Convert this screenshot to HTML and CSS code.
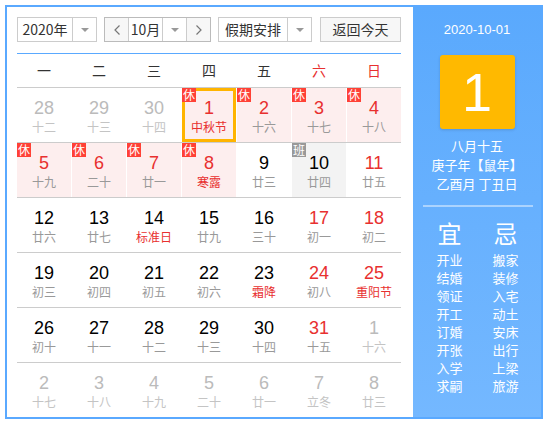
FILE: index.html
```html
<!DOCTYPE html>
<html lang="zh-CN">
<head>
  <meta charset="UTF-8">
  <meta name="viewport" content="width=device-width, initial-scale=1.0">
  <title>万年历</title>
  <link rel="stylesheet" href="styles.css">
</head>
<body>
  <div class="calendar">
    <div class="main">
      <div class="toolbar">
        <div class="select year-select">
          <span class="select-text">2020年</span>
          <span class="select-arrow"><svg width="8" height="4" viewBox="0 0 8 4"><path d="M0 0h8L4 4z" fill="#999"/></svg></span>
        </div>
        <div class="month-group">
          <span class="nav-btn"><svg width="6" height="10" viewBox="0 0 6 10"><path d="M5.5 0.5L1 5l4.5 4.5" fill="none" stroke="#777" stroke-width="1.2"/></svg></span>
          <div class="select month-select">
            <span class="select-text">10月</span>
            <span class="select-arrow"><svg width="8" height="4" viewBox="0 0 8 4"><path d="M0 0h8L4 4z" fill="#999"/></svg></span>
          </div>
          <span class="nav-btn"><svg width="6" height="10" viewBox="0 0 6 10"><path d="M0.5 0.5L5 5l-4.5 4.5" fill="none" stroke="#777" stroke-width="1.2"/></svg></span>
        </div>
        <div class="select holiday-select">
          <span class="select-text">假期安排</span>
          <span class="select-arrow"><svg width="8" height="4" viewBox="0 0 8 4"><path d="M0 0h8L4 4z" fill="#999"/></svg></span>
        </div>
        <span class="today-btn">返回今天</span>
      </div>

      <div class="weekdays">
        <span>一</span><span>二</span><span>三</span><span>四</span><span>五</span>
        <span class="weekend">六</span><span class="weekend">日</span>
      </div>

      <div class="week">
        <div class="day other"><span class="num">28</span><span class="lunar">十二</span></div>
        <div class="day other"><span class="num">29</span><span class="lunar">十三</span></div>
        <div class="day other"><span class="num">30</span><span class="lunar">十四</span></div>
        <div class="day holiday today"><span class="badge">休</span><span class="num">1</span><span class="lunar fest">中秋节</span></div>
        <div class="day holiday"><span class="badge">休</span><span class="num">2</span><span class="lunar">十六</span></div>
        <div class="day holiday"><span class="badge">休</span><span class="num">3</span><span class="lunar">十七</span></div>
        <div class="day holiday"><span class="badge">休</span><span class="num">4</span><span class="lunar">十八</span></div>
      </div>
      <div class="week">
        <div class="day holiday"><span class="badge">休</span><span class="num">5</span><span class="lunar">十九</span></div>
        <div class="day holiday"><span class="badge">休</span><span class="num">6</span><span class="lunar">二十</span></div>
        <div class="day holiday"><span class="badge">休</span><span class="num">7</span><span class="lunar">廿一</span></div>
        <div class="day holiday"><span class="badge">休</span><span class="num">8</span><span class="lunar fest">寒露</span></div>
        <div class="day"><span class="num">9</span><span class="lunar">廿三</span></div>
        <div class="day workday"><span class="badge work">班</span><span class="num">10</span><span class="lunar">廿四</span></div>
        <div class="day weekend"><span class="num">11</span><span class="lunar">廿五</span></div>
      </div>
      <div class="week">
        <div class="day"><span class="num">12</span><span class="lunar">廿六</span></div>
        <div class="day"><span class="num">13</span><span class="lunar">廿七</span></div>
        <div class="day"><span class="num">14</span><span class="lunar fest">标准日</span></div>
        <div class="day"><span class="num">15</span><span class="lunar">廿九</span></div>
        <div class="day"><span class="num">16</span><span class="lunar">三十</span></div>
        <div class="day weekend"><span class="num">17</span><span class="lunar">初一</span></div>
        <div class="day weekend"><span class="num">18</span><span class="lunar">初二</span></div>
      </div>
      <div class="week">
        <div class="day"><span class="num">19</span><span class="lunar">初三</span></div>
        <div class="day"><span class="num">20</span><span class="lunar">初四</span></div>
        <div class="day"><span class="num">21</span><span class="lunar">初五</span></div>
        <div class="day"><span class="num">22</span><span class="lunar">初六</span></div>
        <div class="day"><span class="num">23</span><span class="lunar fest">霜降</span></div>
        <div class="day weekend"><span class="num">24</span><span class="lunar">初八</span></div>
        <div class="day weekend"><span class="num">25</span><span class="lunar fest">重阳节</span></div>
      </div>
      <div class="week">
        <div class="day"><span class="num">26</span><span class="lunar">初十</span></div>
        <div class="day"><span class="num">27</span><span class="lunar">十一</span></div>
        <div class="day"><span class="num">28</span><span class="lunar">十二</span></div>
        <div class="day"><span class="num">29</span><span class="lunar">十三</span></div>
        <div class="day"><span class="num">30</span><span class="lunar">十四</span></div>
        <div class="day weekend"><span class="num">31</span><span class="lunar">十五</span></div>
        <div class="day other"><span class="num">1</span><span class="lunar">十六</span></div>
      </div>
      <div class="week last">
        <div class="day other"><span class="num">2</span><span class="lunar">十七</span></div>
        <div class="day other"><span class="num">3</span><span class="lunar">十八</span></div>
        <div class="day other"><span class="num">4</span><span class="lunar">十九</span></div>
        <div class="day other"><span class="num">5</span><span class="lunar">二十</span></div>
        <div class="day other"><span class="num">6</span><span class="lunar">廿一</span></div>
        <div class="day other"><span class="num">7</span><span class="lunar">立冬</span></div>
        <div class="day other"><span class="num">8</span><span class="lunar">廿三</span></div>
      </div>
    </div>

    <div class="side">
      <div class="side-date">2020-10-01</div>
      <div class="side-day">1</div>
      <div class="side-lunar">
        <div>八月十五</div>
        <div>庚子年【鼠年】</div>
        <div>乙酉月 丁丑日</div>
      </div>
      <div class="side-divider"></div>
      <div class="almanac">
        <div class="almanac-col">
          <div class="almanac-title">宜</div>
          <div>开业</div><div>结婚</div><div>领证</div><div>开工</div>
          <div>订婚</div><div>开张</div><div>入学</div><div>求嗣</div>
        </div>
        <div class="almanac-col">
          <div class="almanac-title">忌</div>
          <div>搬家</div><div>装修</div><div>入宅</div><div>动土</div>
          <div>安床</div><div>出行</div><div>上梁</div><div>旅游</div>
        </div>
      </div>
    </div>
  </div>
</body>
</html>
```

FILE: styles.css
```css
* {
  box-sizing: border-box;
}
body {
  margin: 0;
  font-family: "Noto Sans CJK SC", sans-serif;
  background-color: #fff;
}
.calendar {
  display: flex;
  margin: 5px;
  width: 538px;
  height: 414px;
  border: 2px solid #5aa9ff;
}
.main {
  width: 406px;
  padding: 10px 12px 0 10px;
}

/* toolbar */
.toolbar {
  display: flex;
  height: 25px;
  margin-bottom: 11px;
}
.select {
  display: flex;
  height: 25px;
  border: 1px solid #ccc;
  background-color: #fff;
  font-size: 14px;
  color: #333;
  line-height: 23px;
}
.select-text {
  flex: 1;
  text-align: center;
}
.select-arrow {
  width: 24px;
  border-left: 1px solid #ccc;
  display: flex;
  align-items: center;
  justify-content: center;
}
.year-select {
  width: 80px;
}
.month-group {
  display: flex;
  width: 107px;
  height: 25px;
  margin-left: 7px;
  border: 1px solid #bbb;
}
.month-group .select {
  border: none;
  border-left: 1px solid #ccc;
  border-right: 1px solid #ccc;
  height: 23px;
  line-height: 23px;
  flex: 1;
}
.nav-btn {
  width: 23px;
  display: flex;
  align-items: center;
  justify-content: center;
  background-color: #f7f7f7;
}
.holiday-select {
  width: 94px;
  margin-left: 7px;
}
.today-btn {
  width: 81px;
  height: 25px;
  margin-left: 8px;
  border: 1px solid #ccc;
  background-color: #f7f7f7;
  font-size: 14px;
  color: #333;
  line-height: 23px;
  text-align: center;
}

/* grid */
.weekdays {
  display: grid;
  grid-template-columns: repeat(7, 54px);
  column-gap: 1px;
  height: 35px;
  border-top: 1px solid #5aa9ff;
  border-bottom: 1px solid #ccc;
  font-size: 14px;
  line-height: 33px;
  text-align: center;
  color: #333;
}
.weekdays .weekend {
  color: #e8302f;
}
.week {
  display: grid;
  grid-template-columns: repeat(7, 54px);
  column-gap: 1px;
  height: 55px;
  border-bottom: 1px solid #ccc;
}
.week.last {
  border-bottom: none;
  height: 54px;
}
.day {
  position: relative;
  display: flex;
  flex-direction: column;
  align-items: center;
  height: 54px;
  padding-top: 9px;
}
.num {
  font-family: "Liberation Sans", Arial, sans-serif;
  font-size: 18px;
  line-height: 22px;
  color: #000;
}
.lunar {
  font-size: 12px;
  line-height: 16px;
  color: #999;
}
.lunar.fest {
  color: #e8302f;
}
.weekend .num,
.holiday .num {
  color: #e8302f;
}
.holiday {
  background-color: #fdeeee;
}
.workday {
  background-color: #f3f3f3;
}
.other .num {
  color: #bbb;
}
.other .lunar {
  color: #c4c4c4;
}
.today {
  box-shadow: inset 0 0 0 3px #ffb400;
}
.badge {
  position: absolute;
  top: 0;
  left: 0;
  width: 14px;
  height: 14px;
  background-color: #ff4136;
  color: #fff;
  font-size: 12px;
  line-height: 14px;
  text-align: center;
}
.badge.work {
  background-color: #999;
}

/* side panel */
.side {
  flex: 1;
  background: linear-gradient(#5aa9fd, #74b8ff);
  color: #fff;
  text-align: center;
  padding-top: 13px;
}
.side-date {
  font-family: "Liberation Sans", Arial, sans-serif;
  font-size: 13px;
  line-height: 20px;
}
.side-day {
  width: 75px;
  height: 74px;
  margin: 15px auto 0;
  background-color: #ffb900;
  border-radius: 3px;
  box-shadow: 0 1px 3px rgba(0, 0, 0, 0.15);
  font-family: "Liberation Sans", Arial, sans-serif;
  font-size: 54px;
  line-height: 74px;
}
.side-lunar {
  margin-top: 7px;
  font-size: 13px;
  line-height: 19px;
}
.side-divider {
  height: 2px;
  margin: 12px 8px 0 10px;
  background-color: rgba(255, 255, 255, 0.45);
}
.almanac {
  display: flex;
  justify-content: center;
  gap: 6px;
  margin-top: 11px;
  padding-left: 1px;
  font-size: 13px;
  line-height: 18px;
}
.almanac-col {
  width: 50px;
}
.almanac-title {
  font-size: 24px;
  line-height: 30px;
  margin-bottom: 3px;
}
```
